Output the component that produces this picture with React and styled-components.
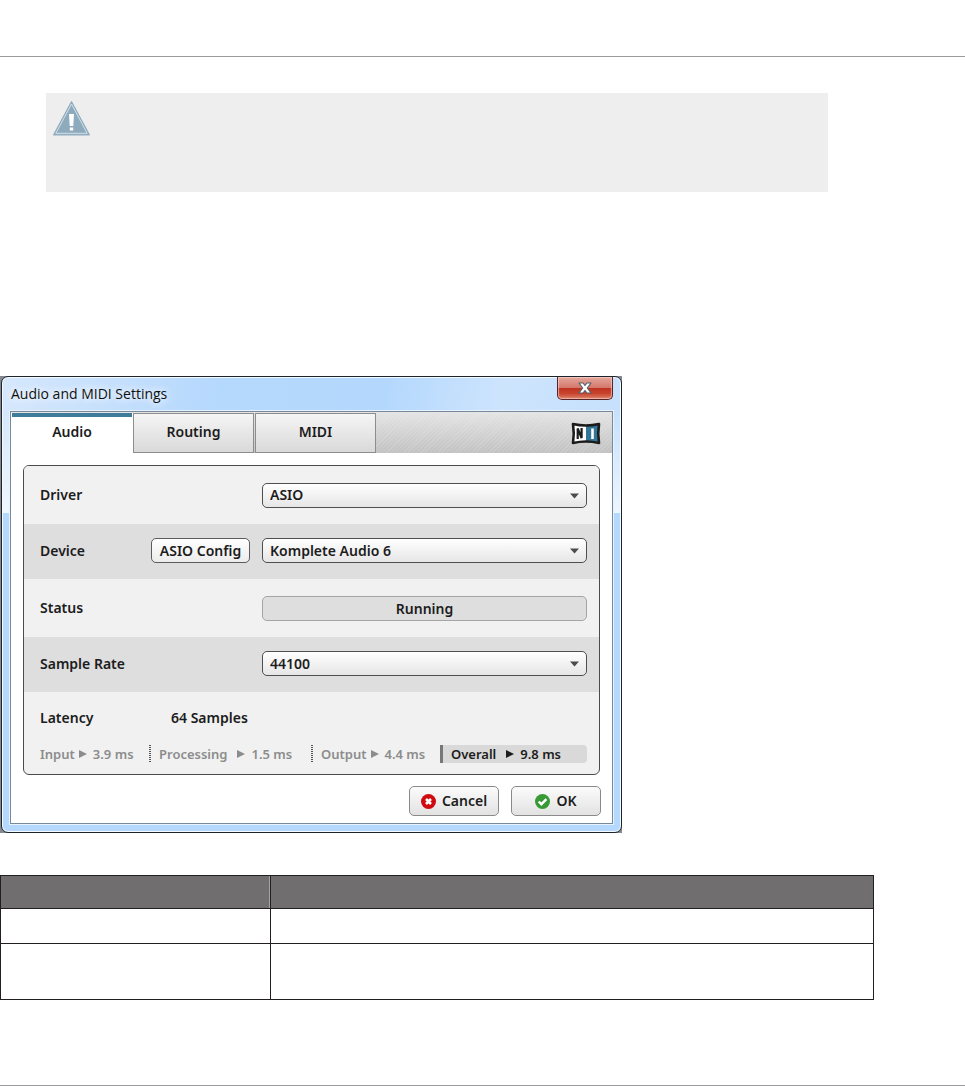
import React, { useState } from 'react';
import styled, { createGlobalStyle, css } from 'styled-components';

const GlobalStyle = createGlobalStyle`
  *, *::before, *::after {
    box-sizing: border-box;
  }

  body {
    margin: 0;
    background: #fff;
    color: #1c1c1c;
    font-family: 'Noto Sans', 'Open Sans', sans-serif;
    font-size: 14px;
    font-weight: 600;
    line-height: 18px;
  }

  button, select, output {
    font: inherit;
    color: inherit;
  }
`;

const Page = styled.main`
  padding-top: 56px;
`;

const Rule = styled.hr`
  margin: 0;
  border: 0;
  height: 1px;
  background: #9b9b9f;
`;

const Note = styled.aside`
  min-height: 99px;
  margin: 36px 137px 184px 46px;
  padding: 8px 7px;
  background: #eee;

  svg {
    display: block;
  }
`;

const WindowBackdrop = styled.div`
  max-width: 622px;
  padding-left: 1px;
  background: #85888c;
`;

const Window = styled.section`
  padding: 0 8px 8px;
  border: 1px solid #1d242c;
  border-radius: 7px;
  box-shadow: inset 0 0 0 1px #f4faff;
  background: linear-gradient(to bottom, transparent 34px, rgba(255, 255, 255, 0.7) 136px, transparent 136px),
    linear-gradient(100deg, #d6e8fc 0, #b5d8fd 34%, #b4d8fd 60%, #cde4fd 78%, #c5e0fd 100%) top / 100% 136px no-repeat,
    #b5d9fe;
`;

const TitleBar = styled.header`
  height: 34px;
  display: flex;
  justify-content: space-between;
  align-items: flex-start;
`;

const WindowTitle = styled.h1`
  margin: 0;
  padding: 8px 12px 8px 1px;
  font-family: 'Open Sans', sans-serif;
  font-size: 14px;
  font-weight: 400;
  line-height: 18px;
  color: #101010;
  text-shadow: 0 0 8px #fff, 0 0 10px #fff;
`;

const CloseButton = styled.button`
  width: 56px;
  height: 23px;
  padding: 0;
  display: flex;
  justify-content: center;
  align-items: center;
  border: 1px solid #57242a;
  border-top: 0;
  border-radius: 0 0 5px 5px;
  box-shadow: inset 0 0 1px 1px rgba(255, 220, 210, 0.6);
  background: linear-gradient(#e5a79d 0, #d5796c 48%, #bd3321 50%, #c9442f 75%, #dc8169 100%);
`;

const Client = styled.div`
  border: 1px solid #77899b;
  box-shadow: 0 0 0 1px #e6f2fe;
  background: #fff;
`;

const TabBar = styled.nav`
  height: 41px;
  padding: 1px 11px 0 1px;
  display: flex;
  align-items: stretch;
  gap: 1px;
  background: repeating-linear-gradient(135deg, rgba(255, 255, 255, 0.12) 0 1px, transparent 1px 3px),
    linear-gradient(#e4e4e4, #c2c2c2);
`;

const Tab = styled.button`
  width: 121px;
  padding: 0 0 2px;
  border: 1px solid #8d8d8d;
  background: linear-gradient(#f5f5f5, #d9d9d9);

  ${({ $active }) =>
    $active &&
    css`
      width: 120px;
      border: 0;
      border-top: 4px solid #3f7c9c;
      padding-bottom: 6px;
      background: #fff;
      box-shadow: -1px 0 #fff, 1px 0 #fff;
    `}
`;

const Brand = styled.div`
  margin-left: auto;
  align-self: center;

  svg {
    display: block;
  }
`;

const Content = styled.div`
  padding: 12px 11px 7px 12px;
`;

const Panel = styled.div`
  margin-right: 1px;
  border: 1px solid #4b4b4b;
  border-radius: 6px;
  overflow: hidden;
  background: #f1f1f1;
`;

const Row = styled.div`
  height: ${({ $shaded }) => ($shaded ? '55px' : '58px')};
  padding: ${({ $shaded }) => ($shaded ? '0 12px 2px 16px' : '0 12px 0 16px')};
  display: grid;
  grid-template-columns: 111px 99px 1fr;
  align-items: center;
  background: ${({ $shaded }) => ($shaded ? '#dedede' : '#f1f1f1')};
`;

const Control = styled.div`
  position: relative;
  grid-column: 3;
  margin-left: 12px;

  svg {
    position: absolute;
    top: 10px;
    right: 8px;
    pointer-events: none;
  }
`;

const Select = styled.select`
  display: block;
  width: 100%;
  height: 25px;
  padding: 0 24px 0 7px;
  appearance: none;
  border: 1px solid #4f4f4f;
  border-radius: 5px;
  background: linear-gradient(#fff, #e6e6e6);
`;

const StatusField = styled.output`
  display: block;
  height: 25px;
  border: 1px solid #a5a5a5;
  border-radius: 5px;
  line-height: 23px;
  text-align: center;
  background: #dedede;
`;

const ConfigButton = styled.button`
  height: 25px;
  padding: 0;
  border: 1px solid #5c5c5c;
  border-radius: 5px;
  background: linear-gradient(#fff, #ececec);
`;

const Latency = styled.div`
  padding: 17px 12px 11px 16px;
`;

const LatencyHead = styled.div`
  display: grid;
  grid-template-columns: 131px 1fr;
  margin-bottom: 18px;
`;

const LatencyList = styled.div`
  display: grid;
  grid-template-columns: 109px 162px 129px 1fr;
  color: #8c8c8c;
  font-size: 13px;
`;

const Segment = styled.div`
  display: flex;
  align-items: center;
  height: 18px;
  padding-left: ${({ $first }) => ($first ? 0 : 10)}px;

  svg {
    margin: 0 6px 0 ${({ $gap }) => $gap}px;
  }

  ${({ $first, $total }) =>
    !$first &&
    !$total &&
    css`
      background: repeating-linear-gradient(#555 0 1px, transparent 1px 2px) left / 2px 100% no-repeat;
    `}

  ${({ $total }) =>
    $total &&
    css`
      padding-left: 8px;
      border-left: 3px solid #777;
      border-radius: 0 4px 4px 0;
      background: #d9d9d9;
      color: #1c1c1c;
    `}
`;

const Actions = styled.div`
  margin-top: 11px;
  display: flex;
  justify-content: flex-end;
  gap: 12px;
`;

const ActionButton = styled.button`
  width: 90px;
  height: 30px;
  padding: 0;
  display: flex;
  justify-content: center;
  align-items: center;
  gap: 6px;
  border: 1px solid #8a8a8a;
  border-radius: 5px;
  background: linear-gradient(#fbfbfb, #e2e2e2);
`;

const TableWrapper = styled.div`
  margin: 42px 91px 85px 0;
`;

const Table = styled.table`
  width: 100%;
  border-collapse: collapse;
  table-layout: fixed;

  th,
  td {
    padding: 0;
    border: 1px solid #231f20;
  }

  th {
    height: 33px;
    background: #706e6f;
  }

  th:first-child {
    width: 270px;
    box-shadow: inset -1px 0 #a5a4a5;
  }
`;

const TableRow = styled.tr`
  height: ${({ $tall }) => ($tall ? '56px' : '35px')};
`;

const WarningIcon = () => (
  <svg width="37" height="35" viewBox="0 0 37 35" role="img" aria-label="Warning">
    <path d="M18.5 0.8 36.3 33.8H0.7Z" fill="#8eabbe" stroke="#8eabbe" strokeWidth="1.2" strokeLinejoin="round" />
    <path d="M18.5 3 34.2 32.3H2.8Z" fill="none" stroke="#d4e0e8" strokeWidth="1" />
    <path d="M16 13h5l-.7 12h-3.6ZM16.8 26.5h3.4v3h-3.4Z" fill="#fff" />
  </svg>
);

const CloseIcon = () => (
  <svg width="14" height="12" viewBox="0 0 14 12" aria-hidden="true">
    <path
      d="M1 1h4l2 2.500L9 1h4L9.300 6l3.700 5H9L7 8.500 5 11H1l3.700-5Z"
      fill="#fff"
      stroke="#59616c"
      strokeWidth="1.2"
      strokeLinejoin="round"
    />
  </svg>
);

const BrandLogo = () => (
  <svg width="30" height="23" viewBox="0 0 30 23" role="img" aria-label="NI">
    <path d="M2 2Q15 5 28 2Q26.500 11.500 28 21Q15 18 2 21Q3.500 11.500 2 2Z" fill="#fff" />
    <path d="M15 3.600Q22 3.500 28 2Q26.500 11.500 28 21Q22 19.500 15 19.400Z" fill="#347698" />
    <path
      d="M2 2Q15 5 28 2Q26.500 11.500 28 21Q15 18 2 21Q3.500 11.500 2 2Z"
      fill="none"
      stroke="#1b1b1b"
      strokeWidth="2.6"
      strokeLinejoin="round"
    />
    <path d="M6.700 17V6.500L10.600 16V6" fill="none" stroke="#1b1b1b" strokeWidth="2.2" />
    <path d="M21.500 6.500V17" stroke="#fff" strokeWidth="2.6" />
  </svg>
);

const DropArrow = () => (
  <svg width="9" height="6" viewBox="0 0 9 6" aria-hidden="true">
    <path d="M0 .5h9L4.500 5.500Z" fill="#4c4c4c" />
  </svg>
);

const PlayArrow = () => (
  <svg width="8" height="8" viewBox="0 0 8 8" aria-hidden="true">
    <path d="M0 0 8 4 0 8Z" fill="currentColor" />
  </svg>
);

const CancelIcon = () => (
  <svg width="15" height="15" viewBox="0 0 15 15" aria-hidden="true">
    <circle cx="7.500" cy="7.500" r="7.500" fill="#cf0a10" />
    <path d="m5 5 5 5M10 5l-5 5" stroke="#fff" strokeWidth="2.6" />
  </svg>
);

const OkIcon = () => (
  <svg width="15" height="15" viewBox="0 0 15 15" aria-hidden="true">
    <circle cx="7.500" cy="7.500" r="7.500" fill="#379a37" />
    <path d="m3.700 7.500 2.700 2.700 5-5" fill="none" stroke="#fff" strokeWidth="2.4" />
  </svg>
);

const tabs = ['Audio', 'Routing', 'MIDI'];

const latencies = [
  { name: 'Input', value: '3.9 ms', gap: 4 },
  { name: 'Processing', value: '1.5 ms', gap: 10 },
  { name: 'Output', value: '4.4 ms', gap: 4 },
  { name: 'Overall', value: '9.8 ms', gap: 10 },
];

const SelectField = ({ id, value }) => (
  <Control>
    <Select id={id} defaultValue={value}>
      <option>{value}</option>
    </Select>
    <DropArrow />
  </Control>
);

function SettingsWindow() {
  const [active, setActive] = useState('Audio');

  return (
    <WindowBackdrop>
      <Window aria-labelledby="window-title">
        <TitleBar>
          <WindowTitle id="window-title">Audio and MIDI Settings</WindowTitle>
          <CloseButton type="button" aria-label="Close">
            <CloseIcon />
          </CloseButton>
        </TitleBar>
        <Client>
          <TabBar>
            {tabs.map((tab) => (
              <Tab key={tab} type="button" $active={tab === active} onClick={() => setActive(tab)}>
                {tab}
              </Tab>
            ))}
            <Brand>
              <BrandLogo />
            </Brand>
          </TabBar>
          <Content>
            <Panel>
              <Row>
                <label htmlFor="driver">Driver</label>
                <SelectField id="driver" value="ASIO" />
              </Row>
              <Row $shaded>
                <label htmlFor="device">Device</label>
                <ConfigButton type="button">ASIO Config</ConfigButton>
                <SelectField id="device" value="Komplete Audio 6" />
              </Row>
              <Row>
                <label htmlFor="status">Status</label>
                <Control>
                  <StatusField id="status">Running</StatusField>
                </Control>
              </Row>
              <Row $shaded>
                <label htmlFor="sample-rate">Sample Rate</label>
                <SelectField id="sample-rate" value="44100" />
              </Row>
              <Latency>
                <LatencyHead>
                  <span>Latency</span>
                  <span>64 Samples</span>
                </LatencyHead>
                <LatencyList>
                  {latencies.map(({ name, value, gap }, index) => (
                    <Segment key={name} $gap={gap} $first={index === 0} $total={name === 'Overall'}>
                      <span>{name}</span>
                      <PlayArrow />
                      <span>{value}</span>
                    </Segment>
                  ))}
                </LatencyList>
              </Latency>
            </Panel>
            <Actions>
              <ActionButton type="button">
                <CancelIcon />
                Cancel
              </ActionButton>
              <ActionButton type="button">
                <OkIcon />
                OK
              </ActionButton>
            </Actions>
          </Content>
        </Client>
      </Window>
    </WindowBackdrop>
  );
}

function App() {
  return (
    <>
      <GlobalStyle />
      <Page>
        <Rule />
        <Note>
          <WarningIcon />
        </Note>
        <SettingsWindow />
        <TableWrapper>
          <Table>
            <thead>
              <tr>
                <th />
                <th />
              </tr>
            </thead>
            <tbody>
              <TableRow>
                <td />
                <td />
              </TableRow>
              <TableRow $tall>
                <td />
                <td />
              </TableRow>
            </tbody>
          </Table>
        </TableWrapper>
        <Rule />
      </Page>
    </>
  );
}

export default App;
